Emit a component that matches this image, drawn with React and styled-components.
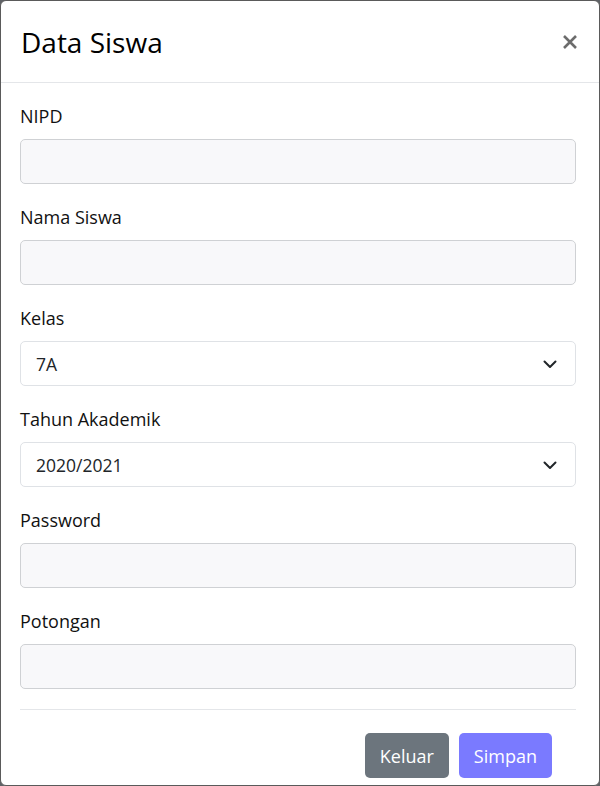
import React from "react"
import styled, { createGlobalStyle } from "styled-components"

const GlobalStyle = createGlobalStyle`
  html, body {
    margin: 0;
    padding: 0;
    background: #5f6266;
  }
  * {
    box-sizing: border-box;
  }
`;

const fields = [
  { label: "NIPD", type: "text" },
  { label: "Nama Siswa", type: "text" },
  { label: "Kelas", type: "select", value: "7A" },
  { label: "Tahun Akademik", type: "select", value: "2020/2021" },
  { label: "Password", type: "password" },
  { label: "Potongan", type: "text" },
];

const Modal = styled.div`
  width: 600px;
  height: 786px;
  background: #fff;
  border: 1px solid #5a5a5a;
  border-radius: 6px;
  overflow: hidden;
  font-family: "Open Sans", "Noto Sans", sans-serif;
  color: #111;
  display: flex;
  flex-direction: column;
`;

const Header = styled.header`
  height: 82px;
  flex-shrink: 0;
  display: flex;
  align-items: center;
  justify-content: space-between;
  padding: 0 21px 0 20px;
  border-bottom: 1px solid #e4e6e9;
`;

const Title = styled.h5`
  margin: 0;
  font-size: 28px;
  font-weight: 500;
  color: #000;
`;

const Close = styled.button`
  border: 0;
  background: none;
  padding: 0;
  width: 16px;
  height: 16px;
  display: flex;
  cursor: pointer;
`;

const Body = styled.div`
  padding: 18px 23px 0 19px;
`;

const Group = styled.div`
  margin-bottom: 18px;

  &:last-child {
    margin-bottom: 0;
  }
`;

const Label = styled.label`
  display: block;
  font-size: 18px;
  line-height: 27px;
  padding-top: 2px;
  margin-bottom: 9px;
`;

const Input = styled.input`
  display: block;
  width: 100%;
  height: 45px;
  border: 1px solid #cfd1d4;
  border-radius: 5px;
  background: #f8f8fa;
  font: inherit;
  font-size: 17.5px;
  padding: 0 15px;
  outline: none;
`;

const SelectBox = styled.div`
  height: 45px;
  border: 1px solid #dfe2e6;
  border-radius: 5px;
  background: #fff;
  display: flex;
  align-items: center;
  justify-content: space-between;
  padding: 0 18px 0 15px;
  font-size: 17.5px;
  color: #212529;
`;

const Footer = styled.footer`
  margin: 20px 23px 0 19px;
  border-top: 1px solid #e4e6e9;
  padding: 23px 24px 0 0;
  display: flex;
  justify-content: flex-end;
  gap: 10px;
`;

const Button = styled.button`
  height: 45px;
  border: 0;
  border-radius: 5px;
  padding: 0 15px;
  background: ${(p) => (p.$primary ? "#7a7aff" : "#6c757d")};
  color: #fff;
  font-family: inherit;
  font-size: 18px;
  cursor: pointer;
`;

const Chevron = () => (
  <svg width="14" height="10" viewBox="0 0 14 10">
    <path d="M1.5 2.5 L7 8 L12.5 2.5" fill="none" stroke="#212529" strokeWidth="2" strokeLinecap="round" strokeLinejoin="round" />
  </svg>
);

const CloseIcon = () => (
  <svg width="16" height="16" viewBox="0 0 16 16">
    <path d="M2 2 L14 14 M14 2 L2 14" stroke="#6c6c6c" strokeWidth="2.6" />
  </svg>
);

export default function App() {
  return (
    <>
      <GlobalStyle />
      <Modal>
        <Header>
          <Title>Data Siswa</Title>
          <Close aria-label="Close"><CloseIcon /></Close>
        </Header>
        <Body>
          {fields.map((f) => (
            <Group key={f.label}>
              <Label>{f.label}</Label>
              {f.type === "select" ? (
                <SelectBox>
                  <span>{f.value}</span>
                  <Chevron />
                </SelectBox>
              ) : (
                <Input type={f.type} />
              )}
            </Group>
          ))}
        </Body>
        <Footer>
          <Button>Keluar</Button>
          <Button $primary>Simpan</Button>
        </Footer>
      </Modal>
    </>
  )
}
